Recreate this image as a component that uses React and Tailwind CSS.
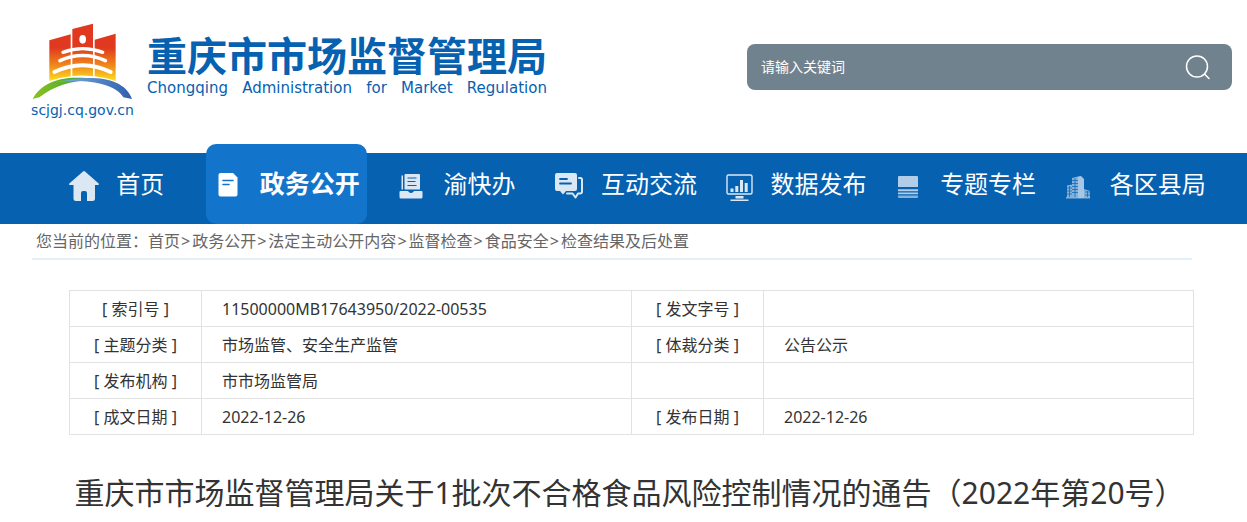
const navItems = [
  { label: '首页', icon: HomeIcon },
  { label: '政务公开', icon: DocIcon, active: true },
  { label: '渝快办', icon: TrayIcon },
  { label: '互动交流', icon: ChatIcon },
  { label: '数据发布', icon: MonitorIcon },
  { label: '专题专栏', icon: StackIcon },
  { label: '各区县局', icon: BuildingIcon },
]

const crumbs = ['首页', '政务公开', '法定主动公开内容', '监督检查', '食品安全', '检查结果及后处置']

const rows = [
  ['索引号', '11500000MB17643950/2022-00535', '发文字号', ''],
  ['主题分类', '市场监管、安全生产监管', '体裁分类', '公告公示'],
  ['发布机构', '市市场监管局', '', ''],
  ['成文日期', '2022-12-26', '发布日期', '2022-12-26'],
]

function Icon({ children }) {
  return (
    <svg width="30" height="32" viewBox="0 0 30 32" fill="#dbe8f4" className="mt-1 shrink-0" aria-hidden="true">
      {children}
    </svg>
  )
}

function HomeIcon() {
  return (
    <Icon>
      <path d="M14 1.4a1.6 1.6 0 0 1 2 0L29.4 13.2c1 .9.6 1.8-.6 1.8H26v13.5a2.5 2.5 0 0 1-2.5 2.5H18v-8a2 2 0 0 0-2-2h-2a2 2 0 0 0-2 2v8H7a2.5 2.5 0 0 1-2.5-2.5V15H1.200c-1.200 0-1.600-.9-.6-1.800z" />
    </Icon>
  )
}

function DocIcon() {
  return (
    <Icon>
      <path fill="#fff" d="M7.500 3H20l4.500 4.500v17a2 2 0 0 1-2 2h-15a2 2 0 0 1-2-2V5a2 2 0 0 1 2-2z" />
      <path d="M10 10.500h10M10 14.500h6" stroke="#1275cb" strokeWidth="1.600" strokeLinecap="round" />
    </Icon>
  )
}

function TrayIcon() {
  return (
    <Icon>
      <path d="M5.500 5.500h1.500v14H5.500zM9.500 4h13.500a1 1 0 0 1 1 1v14.500H8.500V5a1 1 0 0 1 1-1z" />
      <path d="M4.500 21h7c1 0 1.500 2 3.500 2s2.500-2 3.500-2h7a1 1 0 0 1 1 1v5a1.500 1.500 0 0 1-1.500 1.500H5A1.500 1.500 0 0 1 3.500 27v-5a1 1 0 0 1 1-1z" />
      <path d="M11.500 8h9M11.500 11.500h8M11.500 15.500h9" stroke="#0661b1" strokeWidth="1.200" />
    </Icon>
  )
}

function ChatIcon() {
  return (
    <Icon>
      <path d="M3 3h18a2 2 0 0 1 2 2v14a2 2 0 0 1-2 2H12l-3 3.500L6 21H3a2 2 0 0 1-2-2V5a2 2 0 0 1 2-2z" />
      <path d="M25 8h1.500A1.500 1.500 0 0 1 28 9.500v12a2 2 0 0 1-2 2h-2l-2.500 4-3-4H13" fill="none" stroke="#dbe8f4" strokeWidth="2" strokeLinejoin="round" strokeLinecap="round" />
      <path d="M6 9h7M6 13.500h11" stroke="#0661b1" strokeWidth="1.800" strokeLinecap="round" />
    </Icon>
  )
}

function MonitorIcon() {
  return (
    <Icon>
      <rect x="3" y="5" width="25" height="19" rx="1.500" fill="none" stroke="#dbe8f4" strokeWidth="1.400" />
      <path d="M6.500 18.500h3V22h-3zM11.300 16h3v6h-3zM16 10h3v12h-3zM20.700 13h3v9h-3zM11.500 26h8v2.500h-8zM6.500 29.500h18V31h-18z" />
    </Icon>
  )
}

function StackIcon() {
  return (
    <Icon>
      <g fill="#b1cde7">
        <path d="M6 6h18a1 1 0 0 1 1 1v10H5V7a1 1 0 0 1 1-1zM5 19.200h20v2H5zM5 22.400h20v1.800H5z" />
        <path d="M5 25.500h20V27a1 1 0 0 1-1 1H6a1 1 0 0 1-1-1z" opacity=".75" />
      </g>
    </Icon>
  )
}

function BuildingIcon() {
  return (
    <Icon>
      <g fill="#a5c6e4">
        <path d="M15 6.500l3-.5 3 3v19h-6z" />
        <path d="M4 15.500l5-1V28H4zM9 8l6-1.500V28H9zM21 19l6 2v7h-6zM3 27h24v1.500H3z" opacity=".8" />
      </g>
      <path
        d="M4 18h5M4 21h5M4 24h5M9 10.500h6M9 13.500h6M9 16.500h6M9 19.500h6M9 22.500h6M22 22h5M22 25h5M12 8v19M6.500 16v11M24.500 21v6"
        stroke="#0661b1"
        strokeWidth=".7"
      />
    </Icon>
  )
}

function Emblem() {
  return (
    <svg width="101" height="77" viewBox="36 40 303 231" aria-hidden="true">
      <defs>
        <linearGradient id="tower" x1="0" y1="60" x2="0" y2="215" gradientUnits="userSpaceOnUse">
          <stop offset="0.35" stopColor="#e0391f" />
          <stop offset="0.7" stopColor="#f08a1a" />
          <stop offset="1" stopColor="#ffe11a" />
        </linearGradient>
        <linearGradient id="hill" x1="0" y1="0" x2="1" y2="0">
          <stop offset="0" stopColor="#8cc21f" />
          <stop offset="1" stopColor="#1f9a3c" />
        </linearGradient>
        <linearGradient id="river" x1="0" y1="0" x2="1" y2="0">
          <stop offset="0" stopColor="#7fb2e0" />
          <stop offset="1" stopColor="#2f5fae" />
        </linearGradient>
      </defs>
      <path fill="url(#tower)" d="M88 92l64-18v126q-34 4-64 14zM157 58l62-16v158q-30-4-62-1zM224 90l63-18v142q-30-10-63-14z" />
      <ellipse cx="188" cy="89" rx="10" ry="13" fill="#fff" />
      <g fill="none" stroke="#fff" strokeLinecap="round">
        <path d="M129 128Q188 106 248 128" strokeWidth="10" />
        <path d="M120 153Q188 122 256 153" strokeWidth="11" />
        <path d="M103 187Q188 146 272 187" strokeWidth="12" />
      </g>
      <path fill="url(#hill)" d="M38 268C60 225 110 204 168 204c45 0 72 4 84 9-85-7-145 12-194 50z" />
      <path fill="url(#river)" d="M112 217c90-22 200-20 224 51l-26-5c-25-42-110-55-198-46z" />
    </svg>
  )
}

function Header() {
  return (
    <header className="flex items-start justify-between pl-8 pr-[15px] h-[144px]">
      <a href="#" className="flex gap-[14px] text-[#0661b1]">
        <span className="flex w-[101px] flex-col items-center pt-[23px]">
          <Emblem />
          <span className="font-['DejaVu_Sans'] text-sm leading-5">scjgj.cq.gov.cn</span>
        </span>
        <span className="flex flex-col pt-8">
          <span className="text-[40px] leading-[48px] font-bold whitespace-nowrap">重庆市市场监督管理局</span>
          <span className="flex justify-between font-['DejaVu_Sans'] text-[15px] leading-4">
            <span>Chongqing</span>
            <span>Administration</span>
            <span>for</span>
            <span>Market</span>
            <span>Regulation</span>
          </span>
        </span>
      </a>
      <form className="mt-11 flex h-[46px] w-[485px] items-center rounded-lg bg-[#71828f] pl-[14px] pr-[21px]">
        <input
          type="text"
          aria-label="请输入关键词"
          placeholder="请输入关键词"
          className="min-w-0 flex-1 bg-transparent text-sm text-white outline-none placeholder:text-white"
        />
        <button type="button" aria-label="搜索">
          <svg width="26" height="26" viewBox="0 0 26 26" fill="none" stroke="#fff" strokeWidth="1.500">
            <circle cx="12" cy="12.500" r="10.500" />
            <path d="M19.500 20l4.500 4.500" strokeLinecap="round" />
          </svg>
        </button>
      </form>
    </header>
  )
}

function Nav() {
  return (
    <nav className="bg-linear-to-b from-white from-[9px] to-[#0661b1] to-[9px]">
      <ul className="ml-8 mr-7 grid grid-cols-7">
        {navItems.map(({ label, icon: NavIcon, active }) => (
          <li key={label} className="flex">
            <a
              href="#"
              className={
                active
                  ? 'mx-1 flex h-20 flex-1 items-center justify-center gap-[17px] rounded-[10px] bg-[#1275cb] text-[25px] font-bold text-white whitespace-nowrap'
                  : 'mx-1 flex h-20 flex-1 items-center justify-center gap-[17px] text-2xl text-white whitespace-nowrap'
              }
            >
              <NavIcon />
              {label}
            </a>
          </li>
        ))}
      </ul>
    </nav>
  )
}

function Breadcrumb() {
  return (
    <div className="ml-8 mr-[55px] flex h-9 items-center border-b-2 border-[#e3eff8] pl-1 text-base text-[#666] whitespace-nowrap">
      您当前的位置：
      {crumbs.map((c, i) => (
        <span key={c}>
          {i > 0 && <span className="pl-px pr-0.5">&gt;</span>}
          <a href="#">{c}</a>
        </span>
      ))}
    </div>
  )
}

function InfoTable() {
  return (
    <div className="mt-[30px] ml-[69px] mr-[53px]">
      <table className="w-full table-fixed border-collapse text-base text-[#333]">
        <colgroup>
          <col className="w-[132px]" />
          <col />
          <col className="w-[132px]" />
          <col />
        </colgroup>
        <tbody>
          {rows.map((row) => (
            <tr key={row[0]} className="h-9">
              {row.map((cell, i) =>
                i % 2 === 0 ? (
                  <th key={i} className="border border-[#e2e2e2] text-center font-normal">
                    {cell && `[ ${cell} ]`}
                  </th>
                ) : (
                  <td key={i} className="border border-[#e2e2e2] px-5">
                    {cell}
                  </td>
                )
              )}
            </tr>
          ))}
        </tbody>
      </table>
    </div>
  )
}

export default function App() {
  return (
    <div className="bg-white font-['Noto_Sans','Noto_Sans_CJK_SC',sans-serif]">
      <Header />
      <Nav />
      <Breadcrumb />
      <InfoTable />
      <h1 className="mt-[38px] pl-3 text-center text-3xl leading-10 text-[#333]">
        重庆市市场监督管理局关于1批次不合格食品风险控制情况的通告（2022年第20号）
      </h1>
    </div>
  )
}
